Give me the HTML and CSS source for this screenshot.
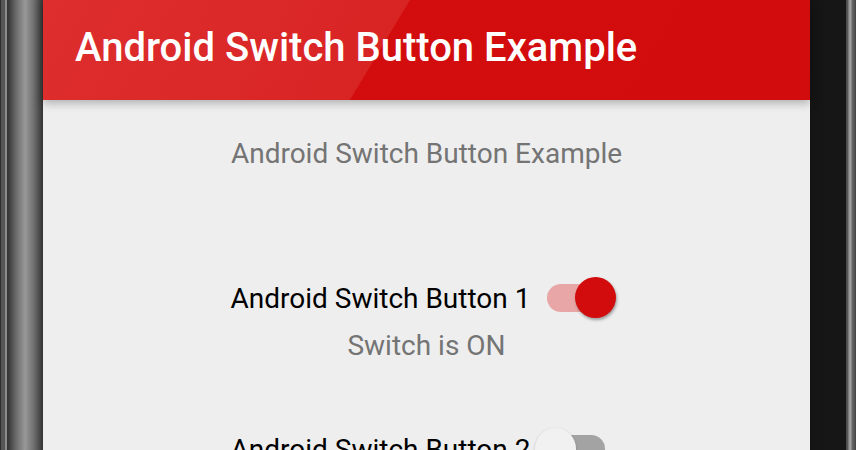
FILE: index.html
```html
<!DOCTYPE html>
<html lang="en">
<head>
    <meta charset="UTF-8">
    <meta name="viewport" content="width=device-width, initial-scale=1.0">
    <title>Android Switch Button Example</title>
    <link rel="stylesheet" href="styles.css">
</head>
<body>
    <div class="phone">
        <div class="bezel-left"></div>
        <div class="screen">
            <header class="app-bar">
                <h1 class="app-title">Android Switch Button Example</h1>
            </header>
            <main class="content">
                <p class="subtitle">Android Switch Button Example</p>
                <div class="switch-row">
                    <span class="switch-label">Android Switch Button 1</span>
                    <span class="switch on"><span class="track"></span><span class="thumb"></span></span>
                </div>
                <p class="status">Switch is ON</p>
                <div class="switch-row">
                    <span class="switch-label">Android Switch Button 2</span>
                    <span class="switch off"><span class="thumb"></span><span class="track"></span></span>
                </div>
            </main>
        </div>
        <div class="bezel-right"></div>
    </div>
</body>
</html>
```

FILE: styles.css
```css
body {
    margin: 0;
    background-color: #111;
    font-family: Roboto, "Liberation Sans", sans-serif;
    overflow: hidden;
}
.phone {
    display: flex;
    height: 450px;
}
.bezel-left {
    width: 43px;
    flex-shrink: 0;
    background:
        linear-gradient(to right,
            #2e2e2e 0, #2e2e2e 1px,
            #555 1px, #555 5px,
            #8a8a8a 5px, #8a8a8a 7px,
            #333 7px, #3c3c3c 9px,
            #6a6a6a 16px, #989898 25px,
            #6e6e6e 34px, #404040 41px, #333 43px);
}
.bezel-right {
    width: 46px;
    flex-shrink: 0;
    background:
        linear-gradient(to right,
            #141414 0, #171717 36px,
            #4a4a4a 36px, #5a5a5a 38px,
            #9a9a9a 39px, #a0a0a0 41px,
            #6a6a6a 42px, #444 46px);
}
.screen {
    width: 767px;
    flex-shrink: 0;
    background-color: #eeeeee;
    display: flex;
    flex-direction: column;
}
.app-bar {
    position: relative;
    z-index: 1;
    height: 100px;
    padding: 0 0 4px 32px;
    box-sizing: border-box;
    background: linear-gradient(121deg, #de2e2e 0, #d92424 314px, #d30d0d 315px, #d20c0c 100%);
    box-shadow: 0 3px 9px rgba(0, 0, 0, 0.28);
}
.app-title {
    margin: 0;
    color: #fff;
    font-size: 40px;
    font-weight: 500;
    line-height: 96px;
    white-space: nowrap;
}
.content {
    display: flex;
    flex-direction: column;
    align-items: center;
}
.subtitle {
    margin: 38px 0 0;
    font-size: 28px;
    line-height: 32px;
    color: #747474;
}
.switch-row {
    display: flex;
    align-items: center;
    gap: 5px;
    margin-top: 107px;
}
.switch-row + .status + .switch-row {
    margin-top: 66px;
}
.switch-label {
    font-size: 28px;
    line-height: 32px;
    color: #000;
    padding-top: 2px;
}
.switch {
    display: flex;
    align-items: center;
    width: 81px;
    height: 41px;
    margin-right: 6px;
}
.track {
    width: 58px;
    height: 28px;
    border-radius: 14px;
}
.thumb {
    width: 41px;
    height: 41px;
    border-radius: 50%;
    flex-shrink: 0;
}
.switch.on .track {
    margin-left: 12px;
    background-color: #e8a6a6;
}
.switch.on .thumb {
    margin-left: -30px;
    background-color: #d20c0c;
    box-shadow: 1px 2px 3px rgba(0, 0, 0, 0.35);
}
.switch.off .thumb {
    position: relative;
    z-index: 1;
    background-color: #f1f1f1;
    box-shadow: 0 1px 3px rgba(0, 0, 0, 0.2);
}
.switch.off .track {
    margin-left: -29px;
    background-color: #a3a3a3;
}
.status {
    margin: 12px 0 0;
    font-size: 28px;
    line-height: 32px;
    color: #747474;
}
```
